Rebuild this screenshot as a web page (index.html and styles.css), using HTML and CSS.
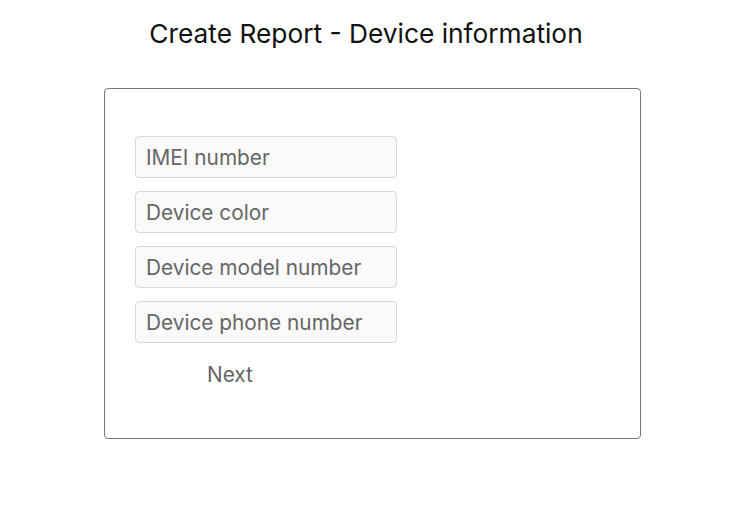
FILE: index.html
```html
<!DOCTYPE html>
<html>
<head>
<meta charset="utf-8">
<link rel="stylesheet" href="styles.css">
</head>
<body>
<h1 class="title">Create Report - Device information</h1>
<div class="card">
  <form class="form">
    <input class="field" type="text" placeholder="IMEI number">
    <input class="field" type="text" placeholder="Device color">
    <input class="field" type="text" placeholder="Device model number">
    <input class="field" type="text" placeholder="Device phone number">
    <button class="next" type="button">Next</button>
  </form>
</div>
</body>
</html>
```
FILE: styles.css
```css
html, body {
  margin: 0;
  padding: 0;
  background: #fff;
  font-family: Inter, "Noto Sans", sans-serif;
}
.title {
  margin: 0;
  padding: 16px 11px 0 0;
  height: 72px;
  box-sizing: border-box;
  text-align: center;
  font-size: 26.3px;
  font-weight: 400;
  color: #111;
  line-height: 36px;
}
.card {
  margin: 16px 0 0 104px;
  width: 537px;
  height: 351px;
  box-sizing: border-box;
  border: 1px solid #777;
  border-radius: 4px;
  padding: 47px 0 0 30px;
}
.form {
  display: flex;
  flex-direction: column;
  align-items: flex-start;
  gap: 13px;
}
.field {
  width: 262px;
  height: 42px;
  box-sizing: border-box;
  border: 1px solid #d8d8d8;
  border-radius: 4px;
  background: #fafafa;
  padding: 0 10px;
  font-family: Inter, "Noto Sans", sans-serif;
  font-size: 20.8px;
  color: #222;
  margin: 0;
}
.field::placeholder {
  color: #666;
}
.next {
  margin: 0 0 0 72px;
  border: none;
  background: none;
  padding: 6px 0;
  font-family: Inter, "Noto Sans", sans-serif;
  font-size: 20.8px;
  color: #666;
}
```
